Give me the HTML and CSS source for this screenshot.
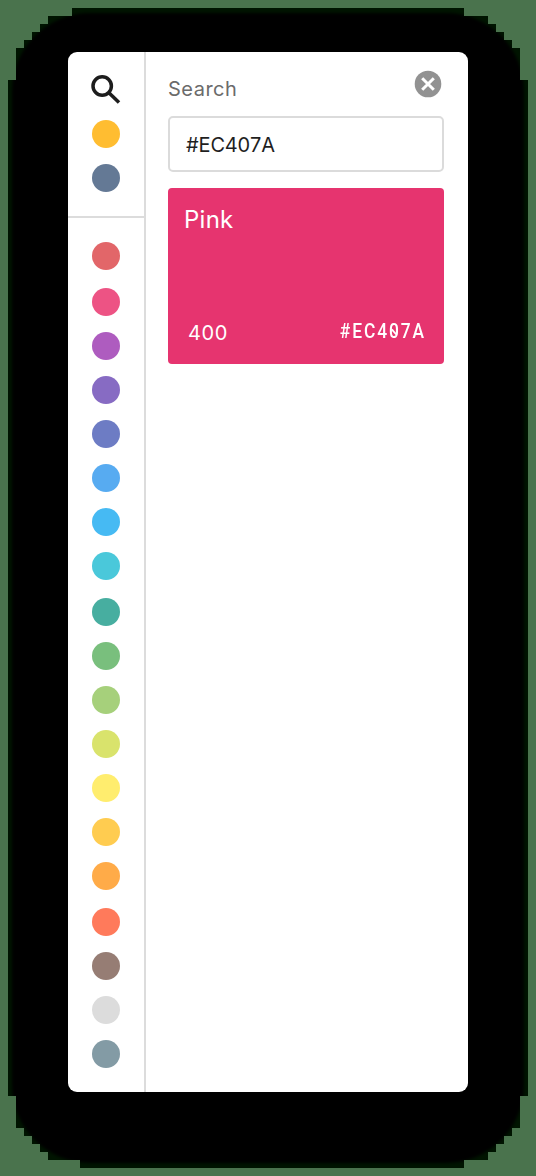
FILE: index.html
```html
<!DOCTYPE html>
<html lang="en">
<head>
<meta charset="utf-8">
<title>Color search</title>
<link rel="stylesheet" href="styles.css">
</head>
<body>
<svg class="backdrop" viewBox="0 0 536 1176" aria-hidden="true">
  <defs>
    <clipPath id="edge"><path d="M72 8H464V16H488V24H496V32H504V40H512V48H520V80H528V1096H520V1128H512V1136H504V1144H496V1152H488V1160H464V1168H80V1160H48V1152H40V1144H32V1136H24V1128H16V1096H8V80H16V48H24V40H32V32H40V24H48V16H72Z"/></clipPath>
    <filter id="soft"><feGaussianBlur stdDeviation="1.5"/></filter>
  </defs>
  <g clip-path="url(#edge)">
    <rect width="536" height="1176" fill="#001400"/>
    <rect x="12" y="13" width="512" height="1150" rx="78" fill="#000" filter="url(#soft)"/>
  </g>
</svg>
<main class="panel">
  <nav class="rail">
    <div class="tools">
      <svg class="search-icon" viewBox="0 0 32 32"><circle cx="12.2" cy="12" r="9.2"/><path d="M18.9 18.7L29 28.6"/></svg>
      <i class="dot amber-dark"></i>
      <i class="dot slate"></i>
    </div>
    <div class="palette">
      <i class="dot red wide"></i>
      <i class="dot pink"></i>
      <i class="dot purple"></i>
      <i class="dot deep-purple"></i>
      <i class="dot indigo"></i>
      <i class="dot blue"></i>
      <i class="dot light-blue"></i>
      <i class="dot cyan wide"></i>
      <i class="dot teal"></i>
      <i class="dot green"></i>
      <i class="dot light-green"></i>
      <i class="dot lime"></i>
      <i class="dot yellow"></i>
      <i class="dot amber"></i>
      <i class="dot orange wide"></i>
      <i class="dot deep-orange"></i>
      <i class="dot brown"></i>
      <i class="dot grey"></i>
      <i class="dot blue-grey"></i>
    </div>
  </nav>
  <section class="content">
    <header class="heading">
      <span class="label">Search</span>
      <svg class="close" viewBox="0 0 28 28"><circle cx="14" cy="14" r="13.3"/><path d="M8.2 8.2L19.8 19.8M19.8 8.2L8.2 19.8"/></svg>
    </header>
    <div class="field">#EC407A</div>
    <article class="card">
      <div class="name">Pink</div>
      <div class="meta"><span class="shade">400</span><span class="hex">#EC407A</span></div>
    </article>
  </section>
</main>
</body>
</html>
```
FILE: styles.css
```css
* { box-sizing: border-box; }
body {
  margin: 0;
  width: 536px;
  height: 1176px;
  padding: 52px 68px 84px;
  overflow: hidden;
  background: #4a734d;
  font-family: Inter, sans-serif;
}
.backdrop { position: absolute; top: 0; left: 0; width: 536px; height: 1176px; }
.panel {
  position: relative;
  display: flex;
  width: 400px;
  height: 1040px;
  border-radius: 9px;
  background: #fff;
  overflow: hidden;
}
.rail { width: 78px; border-right: 2px solid #dcdcdc; }
.tools, .palette { display: flex; flex-direction: column; align-items: center; gap: 16px; }
.tools { height: 166px; padding-top: 22px; border-bottom: 2px solid #dcdcdc; }
.search-icon { width: 32px; height: 32px; margin-bottom: -2px; fill: none; stroke: #1d1d1d; stroke-width: 3.5; }
.palette { padding-top: 24px; }
.dot { display: block; flex: none; width: 28px; height: 28px; border-radius: 50%; }
.wide { margin-bottom: 2px; }
.amber-dark { background: #ffbd31; }
.slate { background: #647995; }
.red { background: #e26669; }
.pink { background: #ed5384; }
.purple { background: #ae5cbf; }
.deep-purple { background: #876bc3; }
.indigo { background: #6d7cc4; }
.blue { background: #57abf1; }
.light-blue { background: #46baf3; }
.cyan { background: #4ac8da; }
.teal { background: #47aea0; }
.green { background: #79bf7d; }
.light-green { background: #a6d07b; }
.lime { background: #d9e36c; }
.yellow { background: #ffed6e; }
.amber { background: #ffcc50; }
.orange { background: #ffab48; }
.deep-orange { background: #ff7a5b; }
.brown { background: #967d74; }
.grey { background: #dcdcdc; }
.blue-grey { background: #839ba5; }
.content { flex: 1; padding: 18px 24px 0 22px; }
.heading { display: flex; justify-content: space-between; height: 46px; padding-right: 2px; }
.label { padding-top: 7px; font-size: 20px; line-height: 24px; letter-spacing: .5px; color: #6b6b6b; }
.close { width: 28px; height: 28px; fill: #929292; stroke: none; }
.close path { stroke: #fff; stroke-width: 3; }
.field {
  height: 56px;
  padding: 1px 16px 0;
  border: 2px solid #dbdbdb;
  border-radius: 5px;
  font-size: 20px;
  line-height: 52px;
  letter-spacing: -.15px;
  font-kerning: none;
  color: #1f1f1f;
}
.card {
  display: flex;
  flex-direction: column;
  justify-content: space-between;
  height: 176px;
  margin-top: 16px;
  padding: 17px 20px 19px 16px;
  border-radius: 4px;
  background: #e6346f;
  color: #fff;
}
.name { font-size: 24px; line-height: 30px; letter-spacing: .25px; }
.meta { display: flex; justify-content: space-between; padding-left: 4px; font-size: 20px; line-height: 24px; }
.shade { letter-spacing: .6px; }
.hex {
  position: relative;
  top: -2px;
  margin-right: -2px;
  font-family: Roboto, sans-serif;
  font-weight: 500;
  letter-spacing: 2.15px;
  transform: scaleX(.87);
  transform-origin: right center;
}
.hex::after {
  content: "";
  position: absolute;
  left: 58.5px;
  top: 11.5px;
  width: 7px;
  height: 1.5px;
  background: #fff;
  transform: rotate(45deg);
}
```
